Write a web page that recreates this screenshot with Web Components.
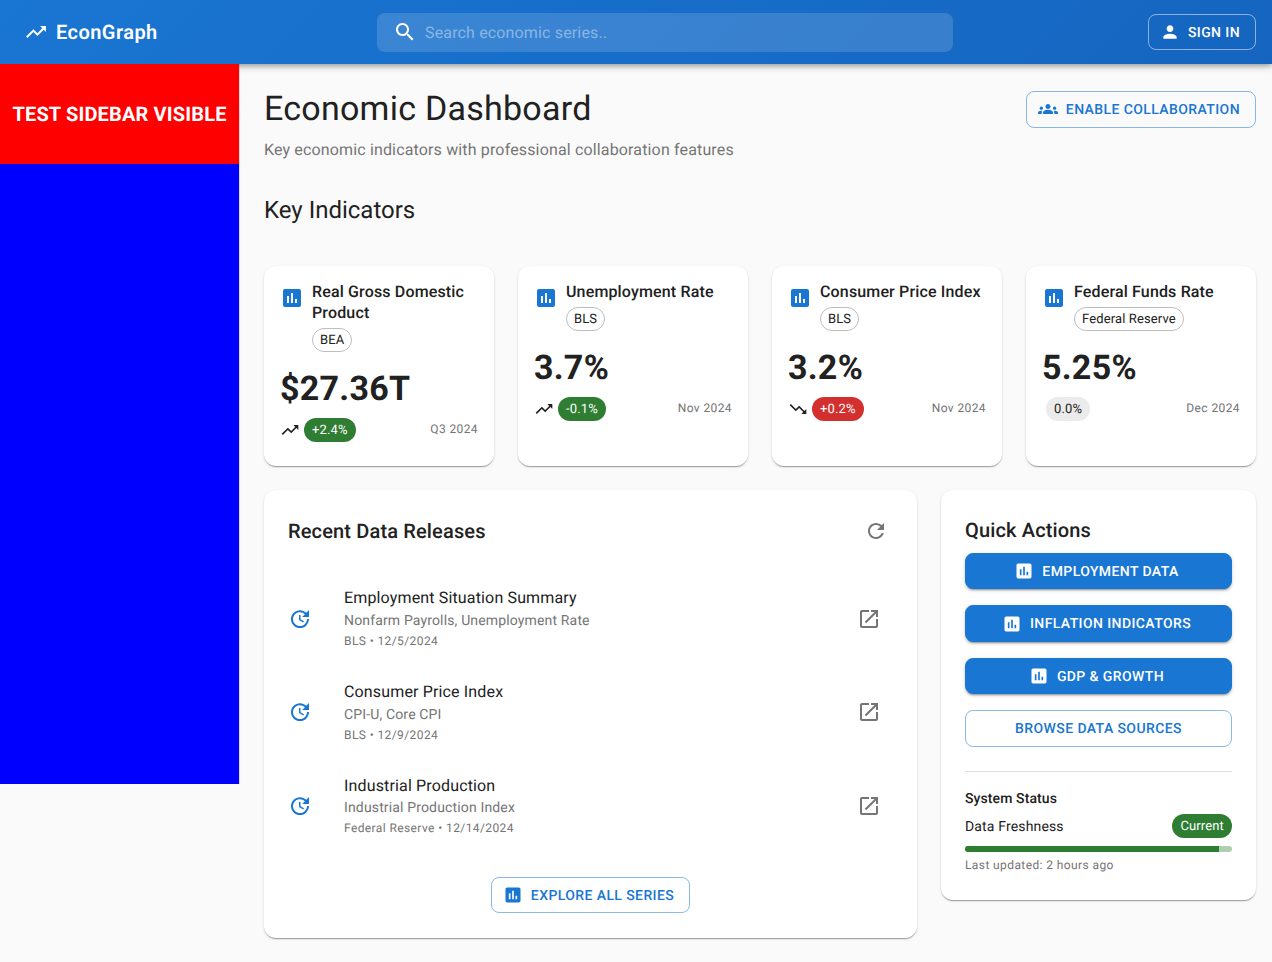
<!DOCTYPE html>
<html>
<head>
<meta charset="utf-8">
<title>EconGraph</title>
<style>
   html, body { margin: 0; padding: 0; }
   body {
      background: #fafafa;
      color: #212121;
      font-family: Roboto, "Liberation Sans", sans-serif;
      text-rendering: geometricPrecision;
   }
</style>
</head>
<body>
<econ-app></econ-app>

<script>
const ICONS = {
   trendUp: 'M16 6l2.29 2.29-4.88 4.88-4-4L2 16.59 3.41 18l6-6 4 4 6.3-6.29L22 12V6z',
   trendDown: 'M16 18l2.29-2.29-4.88-4.88-4 4L2 7.41 3.41 6l6 6 4-4 6.3 6.29L22 12v6z',
   search: 'M15.5 14h-.79l-.28-.27C15.41 12.59 16 11.11 16 9.5 16 5.91 13.09 3 9.5 3S3 5.91 3 9.5 5.91 16 9.5 16c1.61 0 3.09-.59 4.23-1.57l.27.28v.79l5 4.99L20.49 19l-4.99-5zm-6 0C7.01 14 5 11.99 5 9.5S7.01 5 9.5 5 14 7.01 14 9.5 11.99 14 9.5 14z',
   person: 'M12 12c2.21 0 4-1.79 4-4s-1.79-4-4-4-4 1.79-4 4 1.79 4 4 4zm0 2c-2.67 0-8 1.34-8 4v2h16v-2c0-2.66-5.33-4-8-4z',
   groups: 'M12 12.75c1.63 0 3.07.39 4.24.9 1.08.48 1.76 1.56 1.76 2.73V18H6v-1.61c0-1.18.68-2.26 1.76-2.73 1.17-.52 2.61-.91 4.24-.91zM4 13c1.1 0 2-.9 2-2s-.9-2-2-2-2 .9-2 2 .9 2 2 2zm1.13 1.1c-.37-.06-.74-.1-1.13-.1-.99 0-1.93.21-2.78.58C.48 14.9 0 15.62 0 16.43V18h4.5v-1.61c0-.83.23-1.61.63-2.29zM20 13c1.1 0 2-.9 2-2s-.9-2-2-2-2 .9-2 2 .9 2 2 2zm4 3.43c0-.81-.48-1.53-1.22-1.85-.85-.37-1.79-.58-2.78-.58-.39 0-.76.04-1.13.1.4.68.63 1.46.63 2.29V18H24v-1.57zM12 6c1.66 0 3 1.34 3 3s-1.34 3-3 3-3-1.34-3-3 1.34-3 3-3z',
   assessment: 'M19 3H5c-1.1 0-2 .9-2 2v14c0 1.1.9 2 2 2h14c1.1 0 2-.9 2-2V5c0-1.1-.9-2-2-2zM9 17H7v-7h2v7zm4 0h-2V7h2v10zm4 0h-2v-4h2v4z',
   update: 'M21 10.12h-6.78l2.74-2.82c-2.73-2.7-7.15-2.8-9.88-.1-2.73 2.71-2.73 7.08 0 9.79s7.15 2.71 9.88 0C18.32 15.65 19 14.08 19 12.1h2c0 1.98-.88 4.55-2.64 6.29-3.51 3.48-9.21 3.48-12.72 0-3.5-3.47-3.53-9.11-.02-12.58s9.14-3.47 12.65 0L21 3v7.12zM12.5 8v4.25l3.5 2.08-.72 1.21L11 13V8h1.5z',
   refresh: 'M17.65 6.35C16.2 4.9 14.21 4 12 4c-4.42 0-7.99 3.58-7.99 8s3.57 8 7.99 8c3.73 0 6.84-2.55 7.73-6h-2.08c-.82 2.33-3.04 4-5.65 4-3.31 0-6-2.69-6-6s2.69-6 6-6c1.66 0 3.14.69 4.22 1.78L13 11h7V4l-2.35 2.35z',
   openNew: 'M19 19H5V5h7V3H5c-1.11 0-2 .9-2 2v14c0 1.1.89 2 2 2h14c1.1 0 2-.9 2-2v-7h-2v7zM14 3v2h3.59l-9.83 9.83 1.41 1.41L19 6.41V10h2V3h-7z'
};

class EconIcon extends HTMLElement {
   constructor() {
      super();
      this.attachShadow({ mode: 'open' });
   }

   connectedCallback() {
      // attributes may be set after createElement, so draw here
      const size = this.getAttribute('size') || 24;
      const d = ICONS[this.getAttribute('name')];
      this.shadowRoot.innerHTML = `
         <style>
            :host { display: block; flex: none; width: ${size}px; height: ${size}px; }
            svg { display: block; width: 100%; height: 100%; fill: currentColor; }
         </style>
         <svg viewBox="0 0 24 24"><path d="${d}"/></svg>
      `;
   }
}
customElements.define('econ-icon', EconIcon);

const buttonTemplate = document.createElement('template');
buttonTemplate.innerHTML = `
   <style>
      :host {
         display: inline-flex;
         align-items: center;
         justify-content: center;
         box-sizing: border-box;
         height: 36.5px;
         padding: 1px 15px 0;
         border-radius: 8px;
         border: 1px solid rgba(25, 118, 210, 0.5);
         color: #1976d2;
         font-size: 14px;
         font-weight: 500;
         letter-spacing: 0.4px;
         text-transform: uppercase;
         white-space: nowrap;
      }
      :host([variant="contained"]) {
         background: #1976d2;
         border-color: #1976d2;
         color: #fff;
         box-shadow: 0 3px 1px -2px rgba(0,0,0,.2), 0 2px 2px 0 rgba(0,0,0,.14), 0 1px 5px 0 rgba(0,0,0,.12);
      }
      :host([variant="light"]) {
         border-color: rgba(255, 255, 255, 0.5);
         color: #fff;
      }
      econ-icon { margin: -1px 8px 0 -4px; }
   </style>
   <slot></slot>
`;

class EconButton extends HTMLElement {
   constructor() {
      super();
      this.attachShadow({ mode: 'open' });
      this.shadowRoot.appendChild(buttonTemplate.content.cloneNode(true));
      const icon = this.getAttribute('icon');
      if (icon) {
         const el = document.createElement('econ-icon');
         el.setAttribute('name', icon);
         el.setAttribute('size', '20');
         this.shadowRoot.insertBefore(el, this.shadowRoot.querySelector('slot'));
      }
   }
}
customElements.define('econ-button', EconButton);

const chipTemplate = document.createElement('template');
chipTemplate.innerHTML = `
   <style>
      :host {
         display: inline-flex;
         align-items: center;
         box-sizing: border-box;
         height: 24px;
         padding: 0 8px;
         border-radius: 12px;
         font-size: 13px;
         letter-spacing: 0.13px;
         white-space: nowrap;
         background: #ebebeb;
         color: #212121;
      }
      :host([variant="outlined"]) { background: transparent; border: 1px solid #bdbdbd; padding: 0 7px; }
      :host([variant="success"]) { background: #2e7d32; color: #fff; }
      :host([variant="error"]) { background: #d32f2f; color: #fff; }
   </style>
   <slot></slot>
`;

class EconChip extends HTMLElement {
   constructor() {
      super();
      this.attachShadow({ mode: 'open' });
      this.shadowRoot.appendChild(chipTemplate.content.cloneNode(true));
   }
}
customElements.define('econ-chip', EconChip);

const panelTemplate = document.createElement('template');
panelTemplate.innerHTML = `
   <style>
      :host {
         display: block;
         box-sizing: border-box;
         background: #fff;
         border-radius: 12px;
         box-shadow: 0 2px 1px -1px rgba(0,0,0,.2), 0 1px 1px 0 rgba(0,0,0,.14), 0 1px 3px 0 rgba(0,0,0,.12);
      }
   </style>
   <slot></slot>
`;

class EconPanel extends HTMLElement {
   constructor() {
      super();
      this.attachShadow({ mode: 'open' });
      this.shadowRoot.appendChild(panelTemplate.content.cloneNode(true));
   }
}
customElements.define('econ-panel', EconPanel);

const headerTemplate = document.createElement('template');
headerTemplate.innerHTML = `
   <style>
      :host {
         display: flex;
         align-items: center;
         position: relative;
         z-index: 1;
         height: 64px;
         padding: 0 16px 0 24px;
         background: linear-gradient(135deg, #1976d2 0%, #1565c0 100%);
         box-shadow: 0 2px 4px -1px rgba(0,0,0,.2), 0 4px 5px 0 rgba(0,0,0,.14), 0 1px 10px 0 rgba(0,0,0,.12);
         color: #fff;
      }
      .brand { display: flex; align-items: center; gap: 8px; width: 134px; }
      .name { font-size: 20px; font-weight: 600; line-height: 32px; letter-spacing: 0.45px; white-space: nowrap; }
      .search {
         display: flex;
         align-items: center;
         box-sizing: border-box;
         width: 576px;
         height: 39px;
         margin-left: 219px;
         padding-left: 16px;
         border-radius: 8px;
         background: rgba(255, 255, 255, 0.15);
      }
      .placeholder { margin-left: 8px; font-size: 16px; color: rgba(255, 255, 255, 0.42); letter-spacing: 0.15px; }
      econ-button { margin-left: auto; }
   </style>
   <div class="brand">
      <econ-icon name="trendUp"></econ-icon>
      <span class="name">EconGraph</span>
   </div>
   <div class="search">
      <econ-icon name="search"></econ-icon>
      <span class="placeholder">Search economic series..</span>
   </div>
   <econ-button variant="light" icon="person">Sign In</econ-button>
`;

class EconHeader extends HTMLElement {
   constructor() {
      super();
      this.attachShadow({ mode: 'open' });
      this.shadowRoot.appendChild(headerTemplate.content.cloneNode(true));
   }
}
customElements.define('econ-header', EconHeader);

const sidebarTemplate = document.createElement('template');
sidebarTemplate.innerHTML = `
   <style>
      :host {
         display: block;
         position: relative;
         z-index: 2;
         flex: none;
         box-sizing: border-box;
         width: 240px;
         height: 720px;
         border-right: 1px solid rgba(0, 0, 0, 0.12);
         background: #00f;
         background-clip: padding-box;
      }
      .test {
         display: flex;
         align-items: center;
         justify-content: center;
         height: 100px;
         background: #f00;
         color: #fff;
         font-size: 20px;
         font-weight: 700;
         letter-spacing: 0.15px;
         white-space: nowrap;
      }
   </style>
   <div class="test">TEST SIDEBAR VISIBLE</div>
`;

class EconSidebar extends HTMLElement {
   constructor() {
      super();
      this.attachShadow({ mode: 'open' });
      this.shadowRoot.appendChild(sidebarTemplate.content.cloneNode(true));
   }
}
customElements.define('econ-sidebar', EconSidebar);

const indicatorTemplate = document.createElement('template');
indicatorTemplate.innerHTML = `
   <style>
      :host { display: block; }
      econ-panel { height: 100%; padding: 16px 16px 24px; }
      .head { display: flex; align-items: flex-start; gap: 8px; }
      .head > econ-icon { margin-top: 4px; color: #1976d2; }
      .info { display: flex; flex-direction: column; align-items: flex-start; }
      .title { font-size: 16px; font-weight: 500; line-height: 21px; letter-spacing: 0.15px; margin: -1px 0 5px; }
      .value { font-size: 34px; font-weight: 700; line-height: 42px; letter-spacing: 0.25px; margin: 16px 0 8px; }
      .row { display: flex; align-items: center; }
      .trend { margin-right: 4px; }
      .flat { margin-left: 4px; }
      .date { margin-left: auto; padding-bottom: 2px; font-size: 12px; color: #757575; letter-spacing: 0.4px; }
   </style>
   <econ-panel>
      <div class="head">
         <econ-icon name="assessment"></econ-icon>
         <div class="info">
            <div class="title"><slot name="title"></slot></div>
            <econ-chip variant="outlined"><slot name="source"></slot></econ-chip>
         </div>
      </div>
      <div class="value"><slot name="value"></slot></div>
      <div class="row">
         <econ-chip class="delta"><slot name="delta"></slot></econ-chip>
         <span class="date"><slot name="date"></slot></span>
      </div>
   </econ-panel>
`;

class EconIndicator extends HTMLElement {
   constructor() {
      super();
      this.attachShadow({ mode: 'open' });
      this.shadowRoot.appendChild(indicatorTemplate.content.cloneNode(true));
      const trend = this.getAttribute('trend');
      const delta = this.shadowRoot.querySelector('.delta');
      if (trend === 'flat') {
         delta.classList.add('flat');
      } else {
         delta.setAttribute('variant', trend === 'up-bad' ? 'error' : 'success');
         const icon = document.createElement('econ-icon');
         icon.className = 'trend';
         icon.setAttribute('name', trend === 'up-bad' ? 'trendDown' : 'trendUp');
         icon.setAttribute('size', '20');
         delta.parentNode.insertBefore(icon, delta);
      }
   }
}
customElements.define('econ-indicator', EconIndicator);

const releaseTemplate = document.createElement('template');
releaseTemplate.innerHTML = `
   <style>
      :host { display: flex; align-items: center; box-sizing: border-box; height: 93.67px; padding-right: 12px; }
      .lead { color: #1976d2; margin-right: 32px; }
      .text { flex: 1; min-width: 0; align-self: flex-start; margin-top: 14.33px; }
      .primary { font-size: 16px; line-height: 24px; letter-spacing: 0.15px; }
      .secondary { font-size: 14px; line-height: 20px; margin-top: 0.6px; color: #757575; letter-spacing: 0.15px; }
      .meta { font-size: 12px; line-height: 20px; margin-top: 0.1px; color: #757575; letter-spacing: 0.4px; }
      .open { color: #757575; }
   </style>
   <econ-icon class="lead" name="update"></econ-icon>
   <div class="text">
      <div class="primary"><slot name="title"></slot></div>
      <div class="secondary"><slot name="series"></slot></div>
      <div class="meta"><slot name="meta"></slot></div>
   </div>
   <econ-icon class="open" name="openNew"></econ-icon>
`;

class EconRelease extends HTMLElement {
   constructor() {
      super();
      this.attachShadow({ mode: 'open' });
      this.shadowRoot.appendChild(releaseTemplate.content.cloneNode(true));
   }
}
customElements.define('econ-release', EconRelease);

const releasesTemplate = document.createElement('template');
releasesTemplate.innerHTML = `
   <style>
      :host { display: block; }
      econ-panel { height: 100%; padding: 24px 24px 24.5px; }
      .top { display: flex; align-items: center; justify-content: space-between; height: 34px; margin-bottom: 24px; }
      h2 { margin: 0; font-size: 20px; font-weight: 500; line-height: 32px; letter-spacing: 0.15px; }
      .refresh { margin-right: 5px; color: #757575; }
      .more { display: flex; justify-content: center; margin-top: 24px; }
   </style>
   <econ-panel>
      <div class="top">
         <h2>Recent Data Releases</h2>
         <econ-icon class="refresh" name="refresh"></econ-icon>
      </div>
      <slot></slot>
      <div class="more">
         <econ-button icon="assessment">Explore All Series</econ-button>
      </div>
   </econ-panel>
`;

class EconReleases extends HTMLElement {
   constructor() {
      super();
      this.attachShadow({ mode: 'open' });
      this.shadowRoot.appendChild(releasesTemplate.content.cloneNode(true));
   }
}
customElements.define('econ-releases', EconReleases);

const actionsTemplate = document.createElement('template');
actionsTemplate.innerHTML = `
   <style>
      :host { display: block; align-self: start; }
      econ-panel { padding: 24px 24px 25px; }
      h2 { margin: 0 0 6.8px; font-size: 20px; font-weight: 500; line-height: 32px; letter-spacing: 0.15px; }
      .list { display: flex; flex-direction: column; gap: 16px; }
      hr { height: 1px; margin: 24px 0 15.8px; border: 0; background: #e0e0e0; }
      h3 { margin: 0 0 4.8px; font-size: 14px; font-weight: 500; line-height: 22px; letter-spacing: 0.1px; }
      .fresh { display: flex; align-items: center; justify-content: space-between; font-size: 14px; letter-spacing: 0.15px; }
      .fresh span { padding-top: 1px; }
      .fresh econ-chip { padding-top: 1px; }
      .bar { height: 6px; margin-top: 8px; border-radius: 3px; overflow: hidden; background: #aed0b0; }
      .fill { width: 95%; height: 100%; background: #2e7d32; }
      .updated { margin-top: 3px; font-size: 12px; line-height: 20px; color: #757575; letter-spacing: 0.4px; }
   </style>
   <econ-panel>
      <h2>Quick Actions</h2>
      <div class="list">
         <econ-button variant="contained" icon="assessment">Employment Data</econ-button>
         <econ-button variant="contained" icon="assessment">Inflation Indicators</econ-button>
         <econ-button variant="contained" icon="assessment">GDP &amp; Growth</econ-button>
         <econ-button>Browse Data Sources</econ-button>
      </div>
      <hr>
      <h3>System Status</h3>
      <div class="fresh">
         <span>Data Freshness</span>
         <econ-chip variant="success">Current</econ-chip>
      </div>
      <div class="bar"><div class="fill"></div></div>
      <div class="updated">Last updated: 2 hours ago</div>
   </econ-panel>
`;

class EconActions extends HTMLElement {
   constructor() {
      super();
      this.attachShadow({ mode: 'open' });
      this.shadowRoot.appendChild(actionsTemplate.content.cloneNode(true));
   }
}
customElements.define('econ-actions', EconActions);

const appTemplate = document.createElement('template');
appTemplate.innerHTML = `
   <style>
      :host { display: block; }
      .body { display: flex; }
      main { flex: 1; min-width: 0; padding: 24px 16px 24px 24px; }
      .intro { display: flex; align-items: flex-start; justify-content: space-between; }
      h1 { margin: 0 0 8px; font-size: 34px; font-weight: 400; line-height: 42px; letter-spacing: 0.25px; }
      .sub { font-size: 16px; line-height: 24px; color: #757575; letter-spacing: 0.15px; }
      .intro econ-button { margin-top: 3px; }
      h2 { margin: 32px 0 40px; font-size: 24px; font-weight: 400; line-height: 32px; }
      .cards { display: grid; grid-template-columns: repeat(4, 1fr); gap: 24px; margin-bottom: 24px; }
      .lower { display: grid; grid-template-columns: 653px 1fr; gap: 24px; }
   </style>
   <econ-header></econ-header>
   <div class="body">
      <econ-sidebar></econ-sidebar>
      <main>
         <div class="intro">
            <div>
               <h1>Economic Dashboard</h1>
               <div class="sub">Key economic indicators with professional collaboration features</div>
            </div>
            <econ-button icon="groups">Enable Collaboration</econ-button>
         </div>
         <h2>Key Indicators</h2>
         <div class="cards">
            <econ-indicator trend="up">
               <span slot="title">Real Gross Domestic Product</span>
               <span slot="source">BEA</span>
               <span slot="value">$27.36T</span>
               <span slot="delta">+2.4%</span>
               <span slot="date">Q3 2024</span>
            </econ-indicator>
            <econ-indicator trend="up">
               <span slot="title">Unemployment Rate</span>
               <span slot="source">BLS</span>
               <span slot="value">3.7%</span>
               <span slot="delta">-0.1%</span>
               <span slot="date">Nov 2024</span>
            </econ-indicator>
            <econ-indicator trend="up-bad">
               <span slot="title">Consumer Price Index</span>
               <span slot="source">BLS</span>
               <span slot="value">3.2%</span>
               <span slot="delta">+0.2%</span>
               <span slot="date">Nov 2024</span>
            </econ-indicator>
            <econ-indicator trend="flat">
               <span slot="title">Federal Funds Rate</span>
               <span slot="source">Federal Reserve</span>
               <span slot="value">5.25%</span>
               <span slot="delta">0.0%</span>
               <span slot="date">Dec 2024</span>
            </econ-indicator>
         </div>
         <div class="lower">
            <econ-releases>
               <econ-release>
                  <span slot="title">Employment Situation Summary</span>
                  <span slot="series">Nonfarm Payrolls, Unemployment Rate</span>
                  <span slot="meta">BLS • 12/5/2024</span>
               </econ-release>
               <econ-release>
                  <span slot="title">Consumer Price Index</span>
                  <span slot="series">CPI-U, Core CPI</span>
                  <span slot="meta">BLS • 12/9/2024</span>
               </econ-release>
               <econ-release>
                  <span slot="title">Industrial Production</span>
                  <span slot="series">Industrial Production Index</span>
                  <span slot="meta">Federal Reserve • 12/14/2024</span>
               </econ-release>
            </econ-releases>
            <econ-actions></econ-actions>
         </div>
      </main>
   </div>
`;

class EconApp extends HTMLElement {
   constructor() {
      super();
      this.attachShadow({ mode: 'open' });
      this.shadowRoot.appendChild(appTemplate.content.cloneNode(true));
   }
}
customElements.define('econ-app', EconApp);
</script>
</body>
</html>
